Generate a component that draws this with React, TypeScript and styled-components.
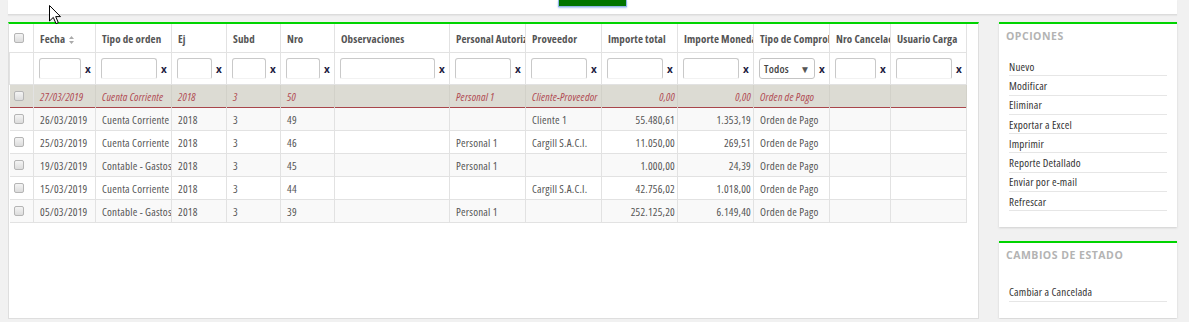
import styled, { createGlobalStyle } from "styled-components";

const GlobalStyle = createGlobalStyle`
  html, body {
    margin: 0;
    padding: 0;
    background: #f1f1f1;
    font-family: "Open Sans", "Liberation Sans", sans-serif;
    font-size: 11px;
    font-stretch: 87.5%;
    letter-spacing: 0.2px;
    color: #555;
  }
`;

const Page = styled.div`
  position: relative;
  width: 1169px;
  padding-left: 8px;
`;

const TopBar = styled.div`
  height: 14px;
  background: #fff;
  border-bottom: 1px solid #dcdcdc;
  box-shadow: 0 1px 1px #e6e6e6;
  display: flex;
`;

const GreenButton = styled.div`
  margin-left: 550px;
  width: 67px;
  height: 6px;
  background: #007300;
  border: 1px solid #8fb5e6;
  border-top: none;
  box-shadow: 0 1px 2px #a9c6ee;
`;

const Content = styled.div`
  display: flex;
  align-items: flex-start;
  gap: 20px;
  margin-top: 7px;
`;

const MainPanel = styled.div`
  width: 969px;
  height: 294px;
  background: #fff;
  border-top: 2px solid #00d400;
  border-left: 1px solid #dedede;
  border-right: 1px solid #dedede;
  border-bottom: 1px solid #dedede;
`;

const Table = styled.table`
  width: 958px;
  table-layout: fixed;
  border-collapse: collapse;
`;

const HeadCell = styled.th`
  height: 28px;
  padding: 0 0 0 6px;
  text-align: left;
  font-weight: 700;
  letter-spacing: 0.1px;
  color: #555;
  white-space: nowrap;
  overflow: hidden;
  border: 1px solid #e2e2e2;
  border-top: none;
`;

const FilterCell = styled.td`
  height: 31px;
  padding: 0 4px 0 5px;
  border: 1px solid #e2e2e2;
`;

const FilterWrap = styled.div`
  display: flex;
  align-items: center;
  gap: 4px;
`;

const FilterInput = styled.input`
  flex: 1;
  min-width: 0;
  height: 21px;
  box-sizing: border-box;
  border: 1px solid #c9c9c9;
  border-bottom-color: #f2f2f2;
  border-radius: 3px 3px 2px 2px;
  padding: 0 4px;
  font: inherit;
  background: #fff;
`;

const Clear = styled.span`
  font-weight: 700;
  font-size: 10px;
  font-stretch: 100%;
  color: #1d2140;
  width: 6px;
`;

const SelectBox = styled.div`
  flex: 1;
  height: 21px;
  box-sizing: border-box;
  border: 1px solid #c4c4c4;
  border-radius: 3px;
  display: flex;
  align-items: center;
  justify-content: space-between;
  padding: 0 4px 0 4px;
  color: #444;
  font-weight: 600;
  font-size: 11px;
`;

const Caret = styled.span`
  font-size: 10px;
  color: #555;
`;

const Row = styled.tr<{ $selected?: boolean; $odd?: boolean }>`
  background: ${(p) => (p.$selected ? "#dcdbd3" : p.$odd ? "#f9f9f9" : "#fff")};
  color: ${(p) => (p.$selected ? "#b04a52" : "#555")};
  font-style: ${(p) => (p.$selected ? "italic" : "normal")};
  border-bottom: 1px solid ${(p) => (p.$selected ? "#a9464b" : "#e2e2e2")};
`;

const Cell = styled.td<{ $right?: boolean; $sel?: boolean }>`
  height: 22px;
  padding: ${(p) => (p.$right ? "0 2px 0 0" : "0 0 0 6px")};
  text-align: ${(p) => (p.$right ? "right" : "left")};
  white-space: nowrap;
  overflow: hidden;
  border-left: 1px solid ${(p) => (p.$sel ? "#d2d1c9" : "#e2e2e2")};
  border-right: 1px solid ${(p) => (p.$sel ? "#d2d1c9" : "#e2e2e2")};
`;

const CheckCell = styled.td`
  padding: 0 0 0 4px;
  border-right: 1px solid #e2e2e2;
`;

const Check = styled.span`
  display: block;
  width: 8px;
  height: 8px;
  border: 1px solid #b5b5b5;
  border-radius: 2px;
  background: linear-gradient(#f4f4f4, #dcdcdc);
`;

const SortIcon = styled.svg`
  margin-left: 4px;
  vertical-align: -1px;
`;

const Side = styled.div`
  width: 178px;
  display: flex;
  flex-direction: column;
  gap: 14px;
`;

const SidePanel = styled.div`
  background: #fff;
  border-top: 2px solid #00d400;
  box-shadow: 0 1px 2px #cfcfcf;
`;

const PanelTitle = styled.div`
  padding: 5px 7px 0;
  height: 20px;
  font-weight: 700;
  font-size: 10.5px;
  font-stretch: 100%;
  color: #b3b3b3;
  letter-spacing: 0.5px;
`;

const PanelBody = styled.div<{ $top: number }>`
  padding: ${(p) => p.$top}px 10px 16px;
`;

const Item = styled.div`
  height: 19.3px;
  box-sizing: border-box;
  display: flex;
  align-items: center;
  border-bottom: 1px solid #e6e6e6;
  color: #333;
`;

const Cursor = styled.svg`
  position: absolute;
  left: 49px;
  top: 5px;
`;

const cols = [24, 62, 76, 55, 54, 54, 115, 76, 76, 76, 76, 76, 61, 76];
const headers = [
  "Fecha",
  "Tipo de orden",
  "Ej",
  "Subd",
  "Nro",
  "Observaciones",
  "Personal Autorizado",
  "Proveedor",
  "Importe total",
  "Importe Moneda",
  "Tipo de Comprobante",
  "Nro Cancelación",
  "Usuario Carga",
];

const selected = [
  "27/03/2019",
  "Cuenta Corriente",
  "2018",
  "3",
  "50",
  "",
  "Personal 1",
  "Cliente-Proveedor",
  "0,00",
  "0,00",
  "Orden de Pago",
  "",
  "",
];

const rows = [
  ["26/03/2019", "Cuenta Corriente", "2018", "3", "49", "", "", "Cliente 1", "55.480,61", "1.353,19", "Orden de Pago", "", ""],
  ["25/03/2019", "Cuenta Corriente", "2018", "3", "46", "", "Personal 1", "Cargill S.A.C.I.", "11.050,00", "269,51", "Orden de Pago", "", ""],
  ["19/03/2019", "Contable - Gastos", "2018", "3", "45", "", "Personal 1", "", "1.000,00", "24,39", "Orden de Pago", "", ""],
  ["15/03/2019", "Cuenta Corriente", "2018", "3", "44", "", "", "Cargill S.A.C.I.", "42.756,02", "1.018,00", "Orden de Pago", "", ""],
  ["05/03/2019", "Contable - Gastos", "2018", "3", "39", "", "Personal 1", "", "252.125,20", "6.149,40", "Orden de Pago", "", ""],
];

const opciones = [
  "Nuevo",
  "Modificar",
  "Eliminar",
  "Exportar a Excel",
  "Imprimir",
  "Reporte Detallado",
  "Enviar por e-mail",
  "Refrescar",
];

const isRight = (i: number) => i === 8 || i === 9;

function App() {
  return (
    <Page>
      <GlobalStyle />
      <TopBar>
        <GreenButton />
      </TopBar>
      <Content>
        <MainPanel>
          <Table>
            <colgroup>
              {cols.map((w, i) => (
                <col key={i} style={{ width: w }} />
              ))}
            </colgroup>
            <thead>
              <tr>
                <CheckCell>
                  <Check />
                </CheckCell>
                {headers.map((h, i) => (
                  <HeadCell key={h}>
                    {h}
                    {i === 0 && (
                      <SortIcon width="5" height="8" viewBox="0 0 5 8">
                        <path d="M2.5 0 L5 3 L0 3 Z M0 5 L5 5 L2.5 8 Z" fill="#aaa" />
                      </SortIcon>
                    )}
                  </HeadCell>
                ))}
              </tr>
              <tr>
                <FilterCell />
                {headers.map((h, i) => (
                  <FilterCell key={h}>
                    <FilterWrap>
                      {i === 10 ? (
                        <SelectBox>
                          Todos <Caret>▼</Caret>
                        </SelectBox>
                      ) : (
                        <FilterInput />
                      )}
                      <Clear>x</Clear>
                    </FilterWrap>
                  </FilterCell>
                ))}
              </tr>
            </thead>
            <tbody>
              <Row $selected>
                <CheckCell>
                  <Check />
                </CheckCell>
                {selected.map((v, i) => (
                  <Cell key={i} $right={isRight(i)} $sel>
                    {v}
                  </Cell>
                ))}
              </Row>
              {rows.map((r, ri) => (
                <Row key={ri} $odd={ri % 2 === 0}>
                  <CheckCell>
                    <Check />
                  </CheckCell>
                  {r.map((v, i) => (
                    <Cell key={i} $right={isRight(i)}>
                      {v}
                    </Cell>
                  ))}
                </Row>
              ))}
            </tbody>
          </Table>
        </MainPanel>
        <Side>
          <SidePanel>
            <PanelTitle>OPCIONES</PanelTitle>
            <PanelBody $top={8}>
              {opciones.map((o) => (
                <Item key={o}>{o}</Item>
              ))}
            </PanelBody>
          </SidePanel>
          <SidePanel>
            <PanelTitle>CAMBIOS DE ESTADO</PanelTitle>
            <PanelBody $top={14}>
              <Item>Cambiar a Cancelada</Item>
            </PanelBody>
          </SidePanel>
        </Side>
      </Content>
      <Cursor width="13" height="20" viewBox="0 0 13 20">
        <path
          d="M0.5 0.5 L0.5 16 L4.3 12.4 L7 18.6 L9.3 17.6 L6.7 11.6 L11.5 11.6 Z"
          fill="#fff"
          stroke="#000"
          strokeWidth="1"
          strokeLinejoin="round"
        />
      </Cursor>
    </Page>
  );
}

export default App;
